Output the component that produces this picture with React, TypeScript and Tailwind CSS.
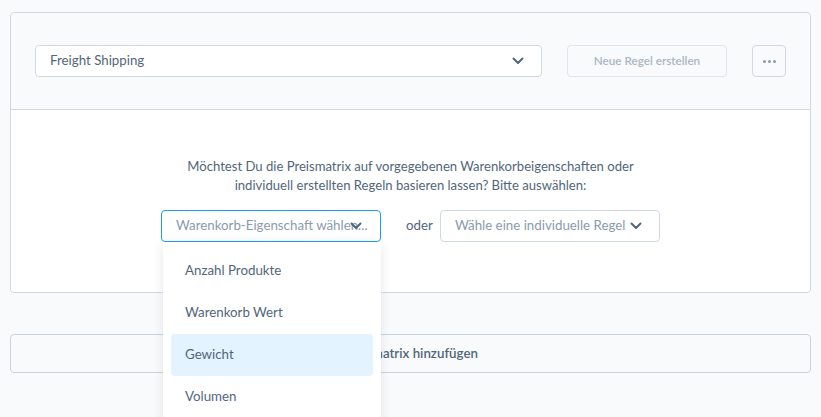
import { useState } from 'react';

function Chevron({ className }: { className?: string }) {
  return (
    <svg width="12" height="8" viewBox="0 0 12 8" className={className} fill="none">
      <path d="M1.5 1.5 L6 6 L10.5 1.5" stroke="#52667a" strokeWidth="2" strokeLinecap="round" strokeLinejoin="round" />
    </svg>
  );
}

const options = ['Anzahl Produkte', 'Warenkorb Wert', 'Gewicht', 'Volumen'];

export default function App() {
  const [hovered, setHovered] = useState('Gewicht');

  return (
    <div
      className="min-h-screen bg-[#f9fafb] px-[10px] pt-[12px] text-[#52667a]"
      style={{ fontFamily: 'Lato, "Noto Sans", sans-serif' }}
    >
      {/* Shipping card */}
      <div className="rounded-[4px] border border-[#d1d9e0]">
        <div className="flex h-[97px] items-center gap-[25px] rounded-t-[4px] border-b border-[#d1d9e0] bg-[#f9fafb] px-[24px]">
          <div className="flex h-[32px] flex-1 items-center justify-between rounded-[4px] border border-[#d1d9e0] bg-white pl-[14px] pr-[17px] text-[13.3px]">
            <span>Freight Shipping</span>
            <Chevron />
          </div>
          <button
            disabled
            className="h-[32px] w-[160px] rounded-[4px] border border-[#e0e6eb] text-[11.7px] font-semibold text-[#a9b7c4]"
          >
            Neue Regel erstellen
          </button>
          <button className="flex h-[32px] w-[34px] items-center justify-center gap-[2px] rounded-[4px] border border-[#d1d9e0]">
            <span className="h-[3px] w-[3px] rounded-full bg-[#8a9aab]" />
            <span className="h-[3px] w-[3px] rounded-full bg-[#8a9aab]" />
            <span className="h-[3px] w-[3px] rounded-full bg-[#8a9aab]" />
          </button>
        </div>

        <div className="flex h-[182px] flex-col items-center rounded-b-[4px] bg-white pt-[47px]">
          <p className="text-center text-[13.1px] leading-[19px]">
            Möchtest Du die Preismatrix auf vorgegebenen Warenkorbeigenschaften oder
            <br />
            individuell erstellten Regeln basieren lassen? Bitte auswählen:
          </p>
          <div className="mt-[15px] flex items-center">
            <div className="relative mr-[25px]">
              <div className="relative flex h-[32px] w-[220px] items-center overflow-hidden rounded-[4px] border border-[#189eff] bg-white pl-[14px] text-[13.3px] text-[#8b9bab]">
                <span className="whitespace-nowrap">Warenkorb-Eigenschaft wählen...</span>
                <Chevron className="absolute right-[18px] top-[11px]" />
              </div>
              <div className="absolute left-[2px] top-[32px] z-10 w-[218px] bg-white py-[8px] shadow-[0_2px_10px_rgba(82,102,122,0.15)]">
                {options.map((o) => (
                  <div
                    key={o}
                    onMouseEnter={() => setHovered(o)}
                    className={
                      'mx-[8px] flex h-[42px] items-center rounded-[4px] px-[14px] text-[13.3px] ' +
                      (hovered === o ? 'bg-[#e3f3ff]' : '')
                    }
                  >
                    {o}
                  </div>
                ))}
              </div>
            </div>
            <span className="w-[26px] text-[13.3px]">oder</span>
            <div className="ml-[8px] flex h-[32px] w-[220px] items-center justify-between rounded-[4px] border border-[#d1d9e0] bg-white pl-[14px] pr-[17px] text-[13.3px] text-[#8b9bab]">
              <span className="whitespace-nowrap">Wähle eine individuelle Regel</span>
              <Chevron />
            </div>
          </div>
        </div>
      </div>

      <button className="mt-[41px] h-[39px] w-full rounded-[4px] border border-[#c9d3dc] text-[13.3px] font-semibold text-[#52667a]">
        Preismatrix hinzufügen
      </button>
    </div>
  );
}
